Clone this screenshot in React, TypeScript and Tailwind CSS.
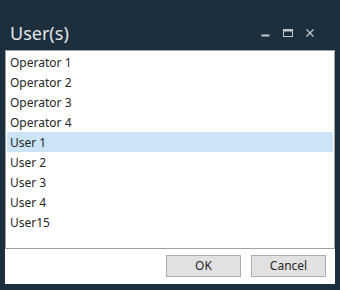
import React from "react";

const users = [
  "Operator 1",
  "Operator 2",
  "Operator 3",
  "Operator 4",
  "User 1",
  "User 2",
  "User 3",
  "User 4",
  "User15",
];

export default function App() {
  const selected = 4;

  return (
    <div
      className="w-[340px] h-[290px] bg-[#1b2f3e] flex flex-col overflow-hidden"
      style={{ fontFamily: '"Segoe UI", "Noto Sans", sans-serif' }}
    >
      {/* Title bar */}
      <div className="h-[50px] flex items-end pb-[5px] pl-[10px] pr-[26px]">
        <div className="flex-1 text-[18px] leading-[24px] text-[#e6e6e6]">User(s)</div>
        <div className="flex items-center gap-[13px] pb-[8px]">
          <svg width="9" height="9" viewBox="0 0 9 9">
            <rect x="0.5" y="6.5" width="8" height="2" fill="#c8c8c8" />
          </svg>
          <svg width="10" height="8" viewBox="0 0 10 8">
            <rect x="0.5" y="0.5" width="9" height="7" fill="none" stroke="#c8c8c8" />
            <rect x="0.5" y="0.5" width="9" height="2" fill="#c8c8c8" />
          </svg>
          <svg width="8" height="8" viewBox="0 0 8 8">
            <path d="M0.5 0.5 L7.5 7.5 M7.5 0.5 L0.5 7.5" stroke="#c8c8c8" strokeWidth="1.2" />
          </svg>
        </div>
      </div>

      {/* Dialog body */}
      <div className="mx-[5px] w-[330px] h-[234px] bg-white flex flex-col">
        <div className="h-[199px] border border-[#a0a0a0] px-px py-px">
          {users.map((u, i) => (
            <div
              key={u}
              className={`h-[20px] pl-[3px] pt-px text-[12px] leading-[20px] text-[#262626] ${
                i === selected ? "bg-[#cce4f7]" : ""
              }`}
            >
              {u}
            </div>
          ))}
        </div>
        <div className="flex-1 flex items-center justify-end gap-[10px] pr-[9px] pb-[1px]">
          <button className="w-[75px] h-[22px] bg-[#e1e1e1] border border-[#adadad] text-[12px] text-[#262626]">
            OK
          </button>
          <button className="w-[75px] h-[22px] bg-[#e1e1e1] border border-[#adadad] text-[12px] text-[#262626]">
            Cancel
          </button>
        </div>
      </div>
    </div>
  );
}
